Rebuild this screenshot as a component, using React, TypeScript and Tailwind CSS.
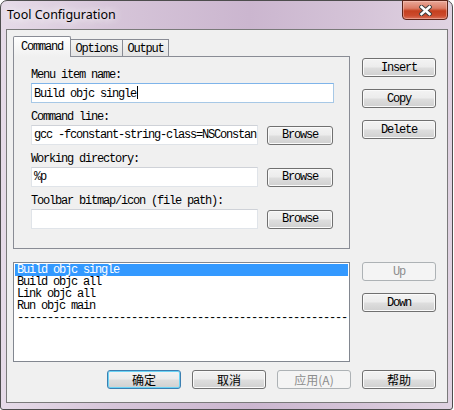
import type { ReactNode } from 'react';

const MONO = "[font-family:'Liberation_Mono',monospace] text-[12px] leading-[12px] tracking-[-1.2px]";
const CJK = "[font-family:'Noto_Sans_CJK_SC','Noto_Sans',sans-serif] text-[12px] leading-[12px]";

const FACE = 'bg-[linear-gradient(to_bottom,#f3f3f3_0%,#ececec_48%,#dedede_52%,#d0d0d0_100%)]';

interface BtnProps {
  children: ReactNode;
  className?: string;
  disabled?: boolean;
  primary?: boolean;
  cjk?: boolean;
}

function Btn({ children, className = 'w-[74px]', disabled, primary, cjk }: BtnProps) {
  const skin = disabled
    ? 'border-[#adb2b5] bg-[#f4f4f4] text-[#8d8d8d]'
    : primary
      ? `border-[#3c7fb1] ${FACE} shadow-[inset_0_0_0_1px_#6bd3f5] text-black`
      : `border-[#707070] ${FACE} shadow-[inset_0_0_0_1px_#fafafa] text-black`;
  return (
    <div className={`h-[19px] shrink-0 flex items-center justify-center rounded-[3px] border ${skin} ${className}`}>
      <span className={cjk ? CJK : MONO}>{children}</span>
    </div>
  );
}

function Field({ children, className = '', focused }: { children?: ReactNode; className?: string; focused?: boolean }) {
  const edge = focused
    ? 'border-[#a7c8e6] border-t-[#7eb4ea]'
    : 'border-[#e0e4e9] border-t-[#cfd2d8]';
  return (
    <div className={`h-[20px] shrink-0 bg-white border ${edge} flex items-center pl-[2px] overflow-hidden whitespace-nowrap ${className}`}>
      <span className={MONO}>{children}</span>
    </div>
  );
}

function Label({ children, className = '' }: { children: ReactNode; className?: string }) {
  return <div className={`${MONO} h-[12px] text-black ${className}`}>{children}</div>;
}

const ITEMS = ['Build objc single', 'Build objc all', 'Link objc all', 'Run objc main'];

export default function App() {
  return (
    <div className="w-[454px] h-[410px] bg-white">
      <div className="w-[453px] h-[410px] flex flex-col rounded-t-[7px] rounded-b-[3px] border border-[#4d4d4d] bg-[linear-gradient(to_right,#e6dbe8_0%,#d6c5d9_25%,#cbb6cf_55%,#d5c4d8_80%,#e0d3e2_100%)]">
        {/* title bar */}
        <div className="h-[28px] flex items-start shrink-0">
          <span className="pl-[6px] self-center [font-family:'Noto_Sans','Open_Sans',sans-serif] text-[12.5px] text-black [text-shadow:0_0_8px_#fff,0_0_12px_#fff]">
            Tool Configuration
          </span>
          <div className="ml-auto mr-[4px] -mt-px w-[46px] h-[20px] rounded-b-[4px] border border-[#5b2419] bg-[linear-gradient(to_bottom,#e9a899_0%,#dc7c66_40%,#c5401f_55%,#cc4a2c_80%,#d9715a_100%)] shadow-[inset_0_0_0_1px_rgba(255,210,200,0.45)] flex items-center justify-center">
            <svg width="13" height="11" viewBox="0 0 13 11">
              <path d="M2.5 2 L10.5 9 M10.5 2 L2.5 9" stroke="#3b3b3b" strokeWidth="4.4" strokeLinecap="square" />
              <path d="M2.5 2 L10.5 9 M10.5 2 L2.5 9" stroke="#ffffff" strokeWidth="2.6" strokeLinecap="square" />
            </svg>
          </div>
        </div>

        {/* client area */}
        <div className="ml-[5px] w-[442px] h-[374px] shrink-0 border border-[#7a7a7a] bg-[#f0f0f0] pl-[6px] pr-[11px] pt-[6px] flex flex-col">
          {/* row 1: tabs + buttons */}
          <div className="flex">
            <div className="w-[337px] flex flex-col">
              <div className="flex items-end h-[21px] -mb-px relative z-10">
                <div className={`w-[58px] h-[21px] border border-b-0 border-[#898c95] rounded-t-[2px] bg-[linear-gradient(to_bottom,#ffffff,#f0f0f0)] flex items-center justify-center pb-px ${MONO}`}>
                  Command
                </div>
                <div className={`w-[52px] h-[17px] mb-px border border-b-0 border-l-0 border-[#898c95] bg-[linear-gradient(to_bottom,#f4f4f4,#e4e4e4)] flex items-center justify-center pt-px ${MONO}`}>
                  Options
                </div>
                <div className={`w-[46px] h-[17px] mb-px border border-b-0 border-l-0 border-[#898c95] bg-[linear-gradient(to_bottom,#f4f4f4,#e4e4e4)] flex items-center justify-center pt-px ${MONO}`}>
                  Output
                </div>
              </div>
              <div className="h-[193px] border border-[#898c95] bg-[#f0f0f0] pt-[12px] pl-[17px] pr-[15px] flex flex-col">
                <Label>Menu item name:</Label>
                <Field focused className="mt-[2px] w-[303px]">
                  Build objc single
                  <span className="inline-block w-px h-[13px] bg-black align-[-2px] ml-px" />
                </Field>

                <Label className="mt-[8px]">Command line:</Label>
                <div className="mt-[2px] flex items-center gap-[9px]">
                  <Field className="w-[227px]">gcc -fconstant-string-class=NSConstan</Field>
                  <Btn className="w-[66px]">Browse</Btn>
                </div>

                <Label className="mt-[8px]">Working directory:</Label>
                <div className="mt-[2px] flex items-center gap-[9px]">
                  <Field className="w-[227px]">%p</Field>
                  <Btn className="w-[66px]">Browse</Btn>
                </div>

                <Label className="mt-[8px]">Toolbar bitmap/icon (file path):</Label>
                <div className="mt-[2px] flex items-center gap-[9px]">
                  <Field className="w-[227px]" />
                  <Btn className="w-[66px]">Browse</Btn>
                </div>
              </div>
            </div>
            <div className="ml-[12px] pt-[22px] flex flex-col gap-[12px]">
              <Btn>Insert</Btn>
              <Btn>Copy</Btn>
              <Btn>Delete</Btn>
            </div>
          </div>

          {/* row 2: list + up/down */}
          <div className="flex mt-[13px]">
            <div className="w-[337px] h-[100px] border border-[#828790] bg-white p-px overflow-hidden">
              {ITEMS.map((t, i) => (
                <div
                  key={t}
                  className={`h-[12px] pl-[2px] whitespace-nowrap ${MONO} ${i === 0 ? 'bg-[#3399ff] text-white' : 'text-black'}`}
                >
                  {t}
                </div>
              ))}
              <div className={`h-[12px] pl-[2px] overflow-hidden text-black ${MONO}`}>
                {'-'.repeat(55)}
              </div>
            </div>
            <div className="ml-[12px] flex flex-col gap-[12px]">
              <Btn disabled>Up</Btn>
              <Btn>Down</Btn>
            </div>
          </div>

          {/* row 3: dialog buttons */}
          <div className="mt-[8px] flex justify-end gap-[11px]">
            <Btn primary cjk>确定</Btn>
            <Btn cjk>取消</Btn>
            <Btn disabled cjk>应用(A)</Btn>
            <Btn cjk>帮助</Btn>
          </div>
        </div>
      </div>
    </div>
  );
}
